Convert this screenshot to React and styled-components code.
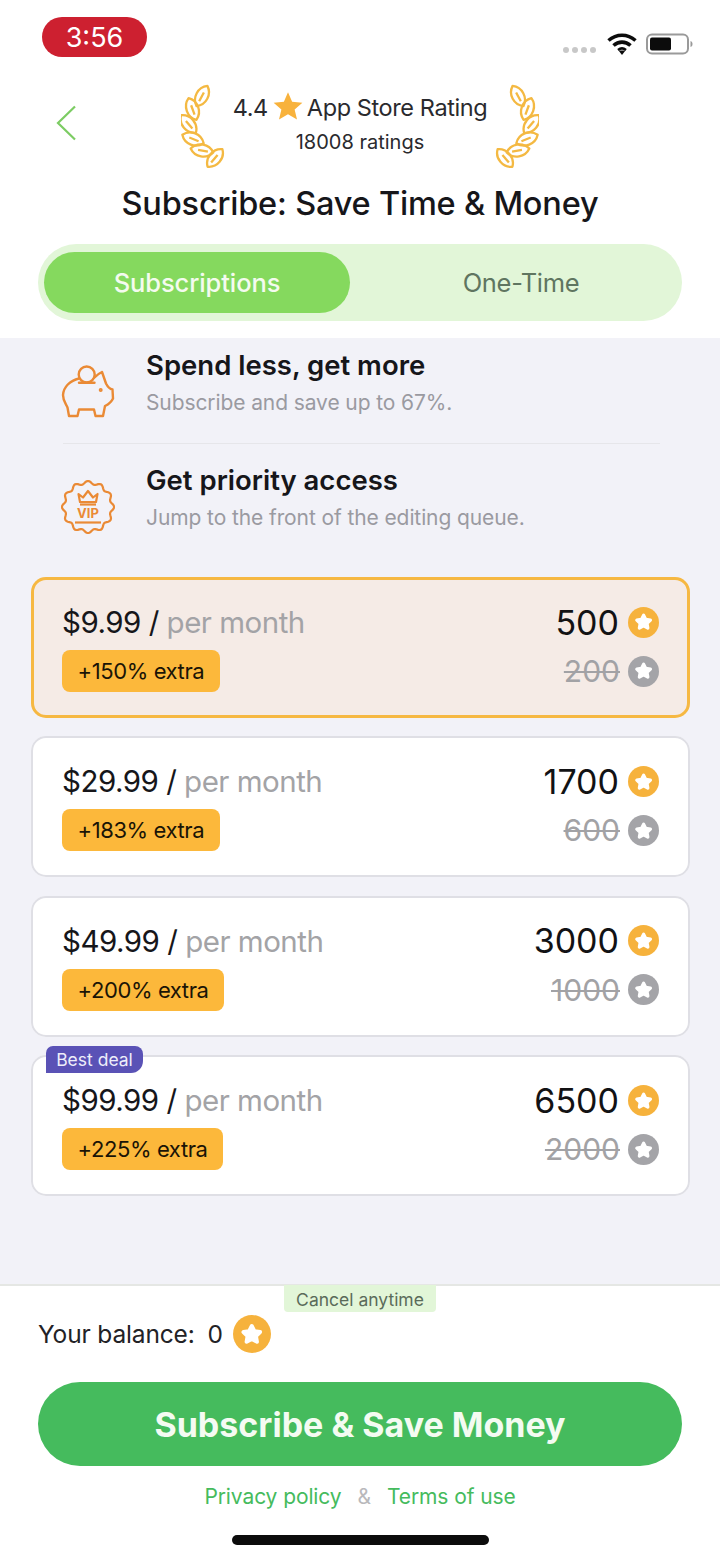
import React from 'react';
import styled, { createGlobalStyle } from 'styled-components';

const GlobalStyle = createGlobalStyle`
  html, body {
    margin: 0;
    padding: 0;
    background: #fff;
  }
  * {
    box-sizing: border-box;
  }
`;

const Page = styled.div`
  width: 720px;
  height: 1560px;
  display: flex;
  flex-direction: column;
  overflow: hidden;
  font-family: Inter, "Liberation Sans", sans-serif;
  color: #16161a;
  background: #fff;
`;

const Header = styled.header`
  height: 338px;
  flex: none;
`;

const StatusBar = styled.div`
  height: 84px;
  padding: 17px 26px 0 42px;
  display: flex;
  justify-content: space-between;
  align-items: flex-start;
`;

const Clock = styled.div`
  width: 105px;
  height: 40px;
  border-radius: 20px;
  background: #cd2030;
  color: #fff;
  font-size: 27px;
  line-height: 42px;
  text-align: center;
`;

const StatusIcons = styled.div`
  display: flex;
  align-items: center;
  margin-top: 15px;
`;

const SignalDots = styled.div`
  display: flex;
  gap: 3px;
  margin: 12px 10px 0 0;
`;

const Dot = styled.span`
  width: 6px;
  height: 6px;
  border-radius: 50%;
  background: #c8c8c8;
`;

const BatteryIcon = styled.svg`
  display: block;
  margin-left: 8px;
`;

const RatingRow = styled.div`
  height: 85px;
  display: grid;
  grid-template-columns: 181px 44px 1fr 44px 181px;
`;

const BackButton = styled.div`
  padding: 21px 0 0 56px;
`;

const RatingText = styled.div`
  display: flex;
  flex-direction: column;
  align-items: center;
  padding-top: 7px;
`;

const RatingLine = styled.div`
  display: flex;
  align-items: center;
  font-size: 23.5px;
  letter-spacing: -0.4px;
  line-height: 34px;
  color: #2a2a2e;
`;

const RatingStar = styled.svg`
  display: block;
  margin: -4px 3px 0 4px;
`;

const RatingCount = styled.div`
  font-size: 20px;
  line-height: 28px;
  margin-top: 3px;
  color: #2a2a2e;
`;

const WreathSvg = styled.svg`
  display: block;
  transform: ${(props) => (props.$mirror ? 'scaleX(-1)' : 'none')};
`;

const Title = styled.h1`
  margin: 15px 0 0;
  font-size: 32.5px;
  line-height: 40px;
  font-weight: 500;
  text-align: center;
  letter-spacing: -0.2px;
`;

const Tabs = styled.div`
  margin: 20px 38px 0;
  height: 77px;
  border-radius: 39px;
  background: #e2f6d8;
  padding: 8px 0 8px 6px;
  display: flex;
`;

const Tab = styled.div`
  width: ${(props) => (props.$active ? '306px' : '332px')};
  height: 61px;
  padding-left: ${(props) => (props.$active ? '0' : '10px')};
  border-radius: 31px;
  background: ${(props) => (props.$active ? '#85d95e' : 'transparent')};
  color: ${(props) => (props.$active ? '#f4fbef' : '#5f7560')};
  font-size: 25.5px;
  letter-spacing: ${(props) => (props.$active ? '-0.1px' : '-0.3px')};
  font-weight: ${(props) => (props.$active ? 500 : 400)};
  line-height: 61px;
  text-align: center;
`;

const Main = styled.main`
  flex: 1;
  background: #f2f2f8;
  padding: 10px 30px 0 31px;
`;

const Features = styled.div`
  margin: 0 0 44px 32px;
  width: 597px;
`;

const Feature = styled.div`
  display: flex;
  align-items: flex-start;
  gap: 31px;
  margin-left: -2px;
`;

const FeatureIcon = styled.div`
  flex: none;
  height: 53px;
  margin-top: 17px;
`;

const FeatureText = styled.div`
  display: flex;
  flex-direction: column;
  gap: 6px;
`;

const FeatureTitle = styled.div`
  font-size: 27.5px;
  line-height: 34px;
  font-weight: 600;
`;

const FeatureSub = styled.div`
  font-size: 21px;
  letter-spacing: -0.1px;
  line-height: 30px;
  color: #9a9aa1;
`;

const Divider = styled.div`
  height: 1px;
  background: #e6e6ea;
  margin: 25px 0 19px;
`;

const Plans = styled.div`
  display: flex;
  flex-direction: column;
  gap: 18.4px;
  width: 659px;
`;

const Plan = styled.div`
  position: relative;
  height: 141px;
  border-radius: 15px;
  padding: 25px 31px 0;
  background: ${(props) => (props.$selected ? '#f5ebe6' : '#fff')};
  box-shadow: inset 0 0 0 ${(props) => (props.$selected ? '3px #f6b842' : '2px #dfdfe5')};
`;

const PlanRow = styled.div`
  display: flex;
  justify-content: space-between;
  align-items: center;
  height: ${(props) => (props.$lower ? '42px' : '40px')};
  margin-top: ${(props) => (props.$lower ? '8px' : '0')};
`;

const Price = styled.div`
  font-size: 29.5px;
  letter-spacing: -0.5px;
  color: #16161a;
`;

const Period = styled.span`
  color: #a3a3a6;
`;

const Extra = styled.div`
  height: 42px;
  padding: 0 15.5px;
  border-radius: 8px;
  background: #fcb83b;
  font-size: 22px;
  letter-spacing: -0.4px;
  line-height: 42px;
  color: #1a1406;
`;

const Amount = styled.div`
  display: flex;
  align-items: center;
  gap: ${(props) => (props.$old ? '8px' : '9px')};
  font-size: ${(props) => (props.$old ? '30px' : '34px')};
  color: ${(props) => (props.$old ? '#a2a2a5' : '#121214')};
`;

const OldValue = styled.span`
  text-decoration: line-through;
  text-decoration-thickness: 2px;
`;

const Ribbon = styled.div`
  position: absolute;
  left: 15px;
  top: -9px;
  width: 97px;
  height: 27px;
  border-radius: 7px 8px 12px 0;
  background: #5a52b6;
  color: #eeeefa;
  font-size: 17.5px;
  line-height: 27px;
  text-align: center;
`;

const Footer = styled.footer`
  flex: none;
  height: 276px;
  border-top: 2px solid #e5e7e4;
  padding: 0 38px;
  background: #fff;
`;

const CancelRow = styled.div`
  display: flex;
  justify-content: center;
  height: 26px;
`;

const CancelTag = styled.div`
  width: 152px;
  height: 27px;
  margin-top: -1px;
  border-radius: 0 0 4px 4px;
  background: #e2f6d8;
  color: #5a6b5a;
  font-size: 17.5px;
  line-height: 29px;
  text-align: center;
`;

const Balance = styled.div`
  display: flex;
  align-items: center;
  height: 38px;
  margin-top: 3px;
  font-size: 24.5px;
  letter-spacing: -0.15px;
  color: #222226;
`;

const BalanceValue = styled.span`
  margin: 0 10px 0 13px;
`;

const SubscribeButton = styled.button`
  display: block;
  width: 100%;
  height: 84px;
  margin-top: 29px;
  border: 0;
  border-radius: 42px;
  background: #45bb5d;
  color: #f4fbf2;
  font-family: inherit;
  font-size: 34px;
  font-weight: 700;
`;

const Links = styled.div`
  display: flex;
  justify-content: center;
  gap: 16px;
  margin-top: 16px;
  font-size: 21px;
  letter-spacing: -0.1px;
  line-height: 30px;
  color: #45bb5d;
`;

const Amp = styled.span`
  color: #b9b9bc;
`;

const HomeBar = styled.div`
  width: 257px;
  height: 10px;
  margin: 23px auto 0;
  border-radius: 5px;
  background: #0c0c0c;
`;

const CoinCircle = styled.span`
  width: ${(props) => props.$size}px;
  height: ${(props) => props.$size}px;
  flex: none;
  border-radius: 50%;
  background: ${(props) => (props.$muted ? '#a4a4a8' : '#f6b23c')};
  display: flex;
  align-items: center;
  justify-content: center;
`;

const Coin = ({ size = 31, muted }) => (
  <CoinCircle $size={size} $muted={muted}>
    <svg width={size * 0.62} height={size * 0.62} viewBox="0 0 24 24">
      <path
        d="M12 4l2.700 5.300 5.800.9-4.200 4.100 1 5.800-5.300-2.800-5.300 2.800 1-5.800-4.200-4.100 5.800-.9z"
        fill="#fff"
        stroke="#fff"
        strokeWidth="4"
        strokeLinejoin="round"
      />
    </svg>
  </CoinCircle>
);

// leaf position and rotation along the arc
const LEAVES = [
  [21, 12, 28],
  [11.5, 25, -20],
  [7.5, 40, -40],
  [12, 55, -68],
  [21, 66.5, -80],
  [34, 74, 40],
];

const Wreath = ({ mirror }) => (
  <WreathSvg $mirror={mirror} width="44" height="85" viewBox="0 0 44 85">
    {LEAVES.map(([x, y, angle]) => (
      <g
        key={y}
        transform={`translate(${x} ${y}) rotate(${angle})`}
        fill="none"
        stroke="#f4b942"
        strokeWidth="2.3"
        strokeLinejoin="round"
      >
        <path d="M0-11.5C8-6 8 6 0 11.5C-8 6-8-6 0-11.5Z" />
        <path d="M0-4V6" />
      </g>
    ))}
  </WreathSvg>
);

const PiggyIcon = () => (
  <svg width="54" height="54" viewBox="0 0 54 54" fill="none" stroke="#ea8a35" strokeWidth="2.4" strokeLinejoin="round" strokeLinecap="round">
    <circle cx="25.7" cy="9.5" r="8" />
    <path d="M18 13.5C9 15.500 2.5 22 2 30c0 6 3 9 4.500 12.500L8 51h8.500l1.500-6.500h15l1.500 6.500H42l2-10c3-1.500 6.500-4 8-7.500l-.5-9c-2.500-.5-5-3-6.500-6l-4-11.500c-2.500 1-5 3-7.500 5.500" />
    <path d="M18 17.7h15.500" />
    <circle cx="39.7" cy="25" r=".8" fill="#ea8a35" />
  </svg>
);

const scallopPath = () => {
  const points = [];
  for (let i = 0; i < 120; i++) {
    const a = (i / 120) * Math.PI * 2;
    const r = 24.5 + 1.6 * Math.cos(a * 12);
    points.push(`${(27 + r * Math.sin(a)).toFixed(2)} ${(27 - r * Math.cos(a)).toFixed(2)}`);
  }
  return `M${points.join('L')}Z`;
};

const VipIcon = () => (
  <svg width="54" height="54" viewBox="0 0 54 54" fill="none" stroke="#ea8a35" strokeWidth="2.2" strokeLinejoin="round">
    <path d={scallopPath()} />
    <path d="M17.5 14l4.500 3.500L27 11l5 6.500 4.500-3.500-1.500 8H19z" />
    <path d="M19 24.500h16" />
    <text x="27" y="38" textAnchor="middle" fill="#ea8a35" stroke="none" fontFamily="Inter, sans-serif" fontSize="13" fontWeight="700">VIP</text>
    <path d="M14 42.500h26" strokeWidth="2.2" />
  </svg>
);

const PLANS = [
  { price: '$9.99', extra: '+150% extra', amount: '500', old: '200', selected: true },
  { price: '$29.99', extra: '+183% extra', amount: '1700', old: '600' },
  { price: '$49.99', extra: '+200% extra', amount: '3000', old: '1000' },
  { price: '$99.99', extra: '+225% extra', amount: '6500', old: '2000', best: true },
];

const App = () => {
  return (
    <Page>
      <GlobalStyle />
      <Header>
        <StatusBar>
          <Clock>3:56</Clock>
          <StatusIcons>
            <SignalDots>
              <Dot />
              <Dot />
              <Dot />
              <Dot />
            </SignalDots>
            <svg width="32" height="24" viewBox="0 0 32 24" fill="none" stroke="#0c0c0c" strokeWidth="3.6">
              <path d="M2.500 8.500c8-7 19-7 27 0" />
              <path d="M7.500 13.500c5-4.500 12-4.500 17 0" />
              <path d="M12 18c2.500-2 5.500-2 8 0" strokeWidth="2.5" />
              <path d="M12.500 18.500L16 23l3.500-4.500z" fill="#0c0c0c" stroke="none" />
            </svg>
            <BatteryIcon width="48" height="24" viewBox="0 0 48 24">
              <rect x="1" y="2.5" width="41" height="19" rx="5" fill="none" stroke="#9a9a9a" strokeWidth="2" />
              <rect x="4" y="5.5" width="21" height="13" rx="2" fill="#0c0c0c" />
              <path d="M44.500 9c1.500.5 2 1.500 2 3s-.5 2.500-2 3z" fill="#9a9a9a" />
            </BatteryIcon>
          </StatusIcons>
        </StatusBar>
        <RatingRow>
          <BackButton>
            <svg width="22" height="36" viewBox="0 0 22 36" fill="none" stroke="#7ccc63" strokeWidth="2.2">
              <path d="M19 1.500L2 18l17 16.500" />
            </svg>
          </BackButton>
          <Wreath />
          <RatingText>
            <RatingLine>
              4.4
              <RatingStar width="32" height="30" viewBox="0 0 24 24">
                <path d="M12 1l3.300 7.600 8.200.7-6.200 5.400 1.900 8.100L12 18.500l-7.200 4.300 1.900-8.100L.5 9.300l8.200-.7z" fill="#f8b23c" />
              </RatingStar>
              App Store Rating
            </RatingLine>
            <RatingCount>18008 ratings</RatingCount>
          </RatingText>
          <Wreath mirror />
        </RatingRow>
        <Title>Subscribe: Save Time &amp; Money</Title>
        <Tabs>
          <Tab $active>Subscriptions</Tab>
          <Tab>One-Time</Tab>
        </Tabs>
      </Header>

      <Main>
        <Features>
          <Feature>
            <FeatureIcon>
              <PiggyIcon />
            </FeatureIcon>
            <FeatureText>
              <FeatureTitle>Spend less, get more</FeatureTitle>
              <FeatureSub>Subscribe and save up to 67%.</FeatureSub>
            </FeatureText>
          </Feature>
          <Divider />
          <Feature>
            <FeatureIcon>
              <VipIcon />
            </FeatureIcon>
            <FeatureText>
              <FeatureTitle>Get priority access</FeatureTitle>
              <FeatureSub>Jump to the front of the editing queue.</FeatureSub>
            </FeatureText>
          </Feature>
        </Features>

        <Plans>
          {PLANS.map((plan) => (
            <Plan key={plan.price} $selected={plan.selected}>
              {plan.best && <Ribbon>Best deal</Ribbon>}
              <PlanRow>
                <Price>
                  {plan.price} / <Period>per month</Period>
                </Price>
                <Amount>
                  {plan.amount}
                  <Coin />
                </Amount>
              </PlanRow>
              <PlanRow $lower>
                <Extra>{plan.extra}</Extra>
                <Amount $old>
                  <OldValue>{plan.old}</OldValue>
                  <Coin muted />
                </Amount>
              </PlanRow>
            </Plan>
          ))}
        </Plans>
      </Main>

      <Footer>
        <CancelRow>
          <CancelTag>Cancel anytime</CancelTag>
        </CancelRow>
        <Balance>
          Your balance:
          <BalanceValue>0</BalanceValue>
          <Coin size={38} />
        </Balance>
        <SubscribeButton>Subscribe &amp; Save Money</SubscribeButton>
        <Links>
          <span>Privacy policy</span>
          <Amp>&amp;</Amp>
          <span>Terms of use</span>
        </Links>
        <HomeBar />
      </Footer>
    </Page>
  );
};

export default App;
